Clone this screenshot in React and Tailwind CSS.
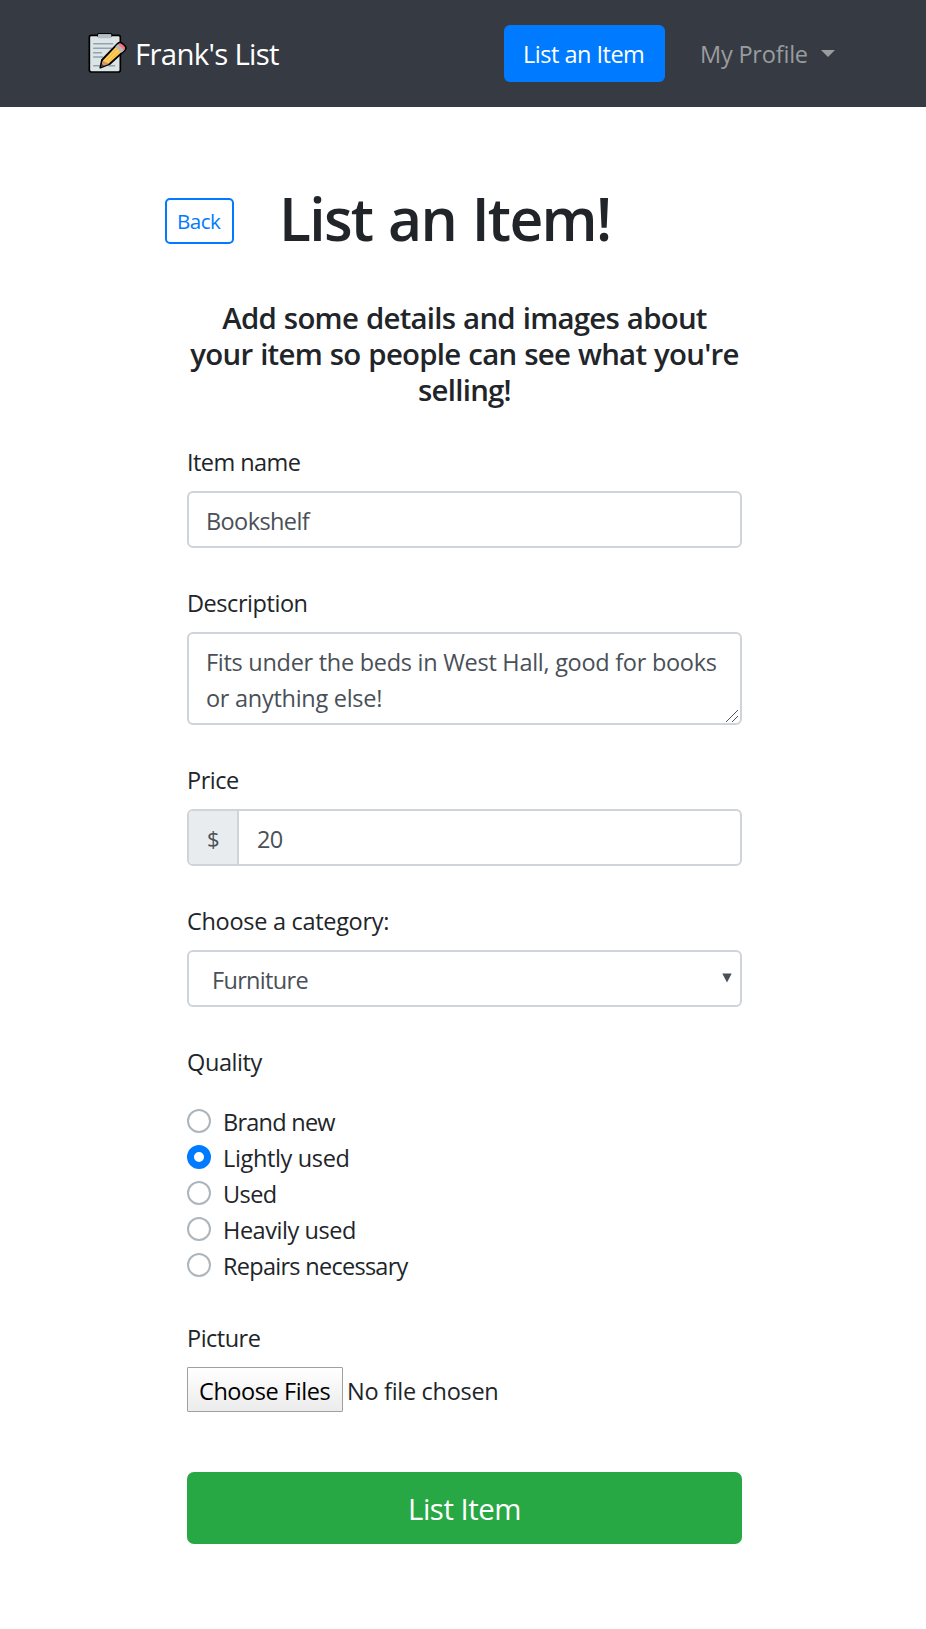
import React from "react";

function MemoIcon() {
  return (
    <svg width="50" height="50" viewBox="0 0 150 150" className="shrink-0">
      <rect x="16" y="22" width="93" height="110" rx="6" fill="#dce4e5" stroke="#000" strokeWidth="5" />
      <rect x="41" y="17" width="42" height="8" rx="3" fill="#b4bfc8" stroke="#000" strokeWidth="4" />
      <rect x="42" y="19" width="40" height="12" rx="2" fill="#b4bfc8" />
      <path d="M29 47H86M29 61H82M29 74H52M29 87H56M29 113H55M74 113H92" stroke="#8ea4b2" strokeWidth="4.5" strokeLinecap="round" />
      <path d="M49 119L54 96L101 47Q107 41 114 46L122 53Q129 60 122 67L77 108Z" fill="#fdcf57" stroke="#000" strokeWidth="5.5" strokeLinejoin="round" />
      <path d="M52 116L57 98L76 107Z" fill="#cf976a" />
      <path d="M50 118L53 108L60 113Z" fill="#3c3a3a" />
      <path d="M66 97L104 58M75 101L110 66" stroke="#f2ab42" strokeWidth="3" />
      <path d="M94 56L103 47L122 65L113 74Z" fill="#b6babd" />
      <path d="M102 49Q108 44 113 48L120 55Q126 61 120 66Z" fill="#fc6f83" />
    </svg>
  );
}

const label = "h-9 leading-[38px]";
const field = "mt-3 h-[57px] rounded-[6px] border-2 border-[#ced4da] text-[#495057]";

const qualities = [
  ["Brand new", "tracking-[-0.75px]"],
  ["Lightly used", "tracking-[-0.35px]"],
  ["Used", "tracking-[-0.6px]"],
  ["Heavily used", "tracking-[-0.45px]"],
  ["Repairs necessary", "tracking-[-0.72px]"],
];

export default function App() {
  return (
    <div className="min-h-[1629px] w-[926px] whitespace-nowrap bg-white font-['Open_Sans',sans-serif] text-[23.5px] text-[#212529]">
      <nav className="flex h-[107px] items-start bg-[#363a42] pl-[84px] text-white">
        <a className="flex w-[420px] pt-[28px]">
          <MemoIcon />
          <span className="ml-px mt-[4px] text-[29.4px] leading-[44px] tracking-[-0.71px]">Frank's List</span>
        </a>
        <button className="mt-[25px] h-[57px] w-[161px] rounded-[6px] bg-[#007bff] pl-[19px] text-left leading-[59px] tracking-[-0.5px]">
          List an Item
        </button>
        <a className="mt-[25px] flex pl-[35px] leading-[59px] tracking-[-0.2px] text-[#9a9c9f]">
          <span className="w-[121px]">My Profile</span>
          <svg width="14" height="7" viewBox="0 0 14 7" className="mt-[25px]">
            <path d="M0 0H14L7 7Z" fill="#9a9c9f" />
          </svg>
        </a>
      </nav>

      <header className="flex h-[192px] items-start pl-[165px] pt-[74px]">
        <button className="mt-[17px] h-[46px] w-[69px] rounded-[5px] border-2 border-[#007bff] pl-[10px] text-left text-[20.6px] leading-[43px] tracking-[-0.54px] text-[#007bff]">
          Back
        </button>
        <h1 className="ml-[45px] text-[58.8px] font-semibold leading-[74px] tracking-[-1.7px] [word-spacing:2px]">List an Item!</h1>
      </header>

      <form className="ml-[187px] w-[555px]">
        <h5 className="pt-px text-center text-[29.4px] font-semibold leading-[36px] tracking-[-0.74px] [word-spacing:0.9px]">
          Add some details and images about
          <br />
          your item so people can see what you're
          <br />
          selling!
        </h5>

        <div className="mt-[35px]">
          <div className={`${label} tracking-[-0.55px]`}>Item name</div>
          <div className={`${field} pl-[17px] leading-[57px] tracking-[-0.6px]`}>Bookshelf</div>
        </div>

        <div className="mt-9">
          <div className={`${label} tracking-[-0.45px]`}>Description</div>
          <div className="mt-3 flex h-[93px] items-end justify-between rounded-[6px] border-2 border-[#ced4da] pl-[17px] text-[#495057]">
            <div className="h-full w-[518px] shrink-0 pt-[10px] leading-[36px] tracking-[-0.28px]">
              Fits under the beds in West Hall, good for books
              <br />
              or anything else!
            </div>
            <svg width="14" height="14" viewBox="0 0 14 14" className="mr-px shrink-0" shapeRendering="crispEdges">
              <path d="M1 13L13 1M7 13L13 7" stroke="#555" strokeWidth="1" />
            </svg>
          </div>
        </div>

        <div className="mt-9">
          <div className={`${label} tracking-[-0.5px]`}>Price</div>
          <div className={`${field} flex overflow-hidden leading-[57px]`}>
            <span className="w-[50px] border-r-2 border-[#ced4da] bg-[#e9ecef] pl-[18px] text-[22px] leading-[55px]">$</span>
            <span className="pl-[18px] tracking-[-0.8px]">20</span>
          </div>
        </div>

        <div className="mt-9">
          <div className={`${label} tracking-[-0.3px]`}>Choose a category:</div>
          <div className={`${field} flex justify-between pl-[23px] pr-[8px] leading-[57px] tracking-[-0.68px]`}>
            <span>Furniture</span>
            <svg width="10" height="10" viewBox="0 0 10 10" className="mt-[21px]">
              <path d="M0.3 0.5H9.7L5 9.5Z" fill="#495057" />
            </svg>
          </div>
        </div>

        <div className="mt-9">
          <div className={`${label} tracking-[-0.4px]`}>Quality</div>
          <div className="mt-6">
            {qualities.map(([name, tracking], i) => (
              <div key={name} className="flex h-9 items-start">
                <span
                  className={
                    i === 1
                      ? "mt-[6px] size-6 rounded-full border-[7px] border-[#007bff] bg-white"
                      : "mt-[6px] size-6 rounded-full border-2 border-[#adb5bd] bg-white"
                  }
                />
                <span className={`ml-[12px] leading-[38px] ${tracking}`}>{name}</span>
              </div>
            ))}
          </div>
        </div>

        <div className="mt-9">
          <div className={`${label} tracking-[-0.5px]`}>Picture</div>
          <div className="mt-3 flex h-[45px]">
            <span className="w-[156px] rounded-[1px] border border-[#a0a0a0] bg-gradient-to-b from-white to-[#ececec] pl-[11px] leading-[46px] tracking-[-0.42px] text-black">
              Choose Files
            </span>
            <span className="ml-[4px] leading-[48px] tracking-[-0.3px]">No file chosen</span>
          </div>
        </div>

        <button className="mt-[60px] h-[72px] w-full rounded-[7px] bg-[#28a745] text-[29.4px] leading-[74px] tracking-[-0.5px] text-white">
          List Item
        </button>
      </form>
    </div>
  );
}
